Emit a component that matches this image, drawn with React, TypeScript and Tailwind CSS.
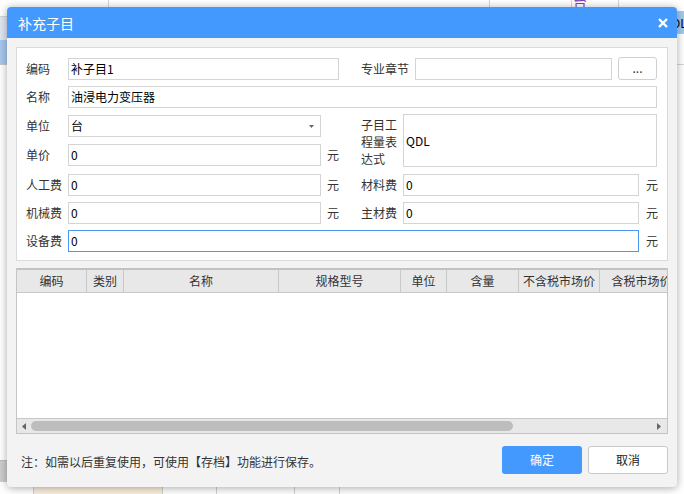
import React from 'react';

const FONT = "font-['Microsoft_YaHei','Noto_Sans_CJK_SC',sans-serif]";

const Input: React.FC<{ w: string; value?: string; focused?: boolean }> = ({ w, value, focused }) => (
  <div
    className={`${w} h-[22px] shrink-0 bg-white border ${focused ? 'border-[#4a98ef]' : 'border-[#d4d4d4]'} flex items-center pl-[2px] text-[12px] leading-none text-black`}
  >
    {value}
  </div>
);

const Label: React.FC<{ w?: string; children: React.ReactNode }> = ({ w = 'w-[42px]', children }) => (
  <div className={`${w} shrink-0 text-[12px] leading-none text-[#333] whitespace-nowrap`}>{children}</div>
);

const Yuan: React.FC = () => (
  <div className="w-[40px] shrink-0 pl-[6px] text-[12px] leading-none text-[#333]">元</div>
);

const columns = [
  { name: '编码', w: 'w-[70px]' },
  { name: '类别', w: 'w-[37px]' },
  { name: '名称', w: 'w-[155px]' },
  { name: '规格型号', w: 'w-[122px]' },
  { name: '单位', w: 'w-[46px]' },
  { name: '含量', w: 'w-[72px]' },
  { name: '不含税市场价', w: 'w-[81px]' },
  { name: '含税市场价', w: 'w-[84px]' },
];

export default function App() {
  return (
    <div className={`relative w-[684px] h-[494px] overflow-hidden bg-white ${FONT}`}>
      {/* spreadsheet behind the dialog */}
      <div className="flex w-full h-full">
        <div className="w-[7px] flex flex-col">
          <div className="h-[17px] border-b border-[#d6d6d6]" />
          <div className="h-[23px] bg-[#dfe7f3]" />
          <div className="h-[25px] bg-[#a7c8ee] border-b border-[#c8c8c8]" />
          <div className="h-[395px]" />
          <div className="h-[22px] bg-[#cdcdcd] border-t border-[#bdbdbd]" />
        </div>
        <div className="flex-1 flex flex-col">
          <div className="h-[17px] flex border-b border-[#d6d6d6]">
            <div className="w-[102px] border-r border-[#d6d6d6]" />
            <div className="w-[381px] border-r border-[#d6d6d6]" />
            <div className="w-[82px] border-r border-[#d6d6d6]" />
            <div className="w-[47px] border-r border-[#d6d6d6] overflow-hidden">
              <div className="-mt-[7px] ml-[1px] text-[14px] leading-[16px] text-[#8a3fb5]">台</div>
            </div>
            <div className="flex-1" />
          </div>
          <div className="flex-1" />
          <div className="h-[14px] flex border-t border-[#d0d0d0]">
            <div className="w-[27px] border-r border-[#d0d0d0]" />
            <div className="w-[129px] bg-[#fbeedd] border-r border-[#d0d0d0]" />
            <div className="w-[54px] border-r border-[#d0d0d0]" />
            <div className="w-[78px] border-r border-[#d0d0d0]" />
            <div className="w-[45px] border-r border-[#d0d0d0]" />
            <div className="flex-1" />
          </div>
        </div>
        <div className="w-[7px] flex flex-col">
          <div className="h-[11px]" />
          <div className="h-[23px] bg-[#a5c9ef] border-b border-[#c8c8c8] overflow-hidden text-[12px] leading-[23px] whitespace-nowrap">
            <span className="-ml-[14px] inline-block">QDL</span>
          </div>
          <div className="h-[31px] border-b border-[#d6d6d6]" />
        </div>
      </div>

      {/* dialog */}
      <div className="absolute left-[7px] top-[7px] w-[670px] h-[480px] bg-[#f3f3f3] rounded-[4px] shadow-[0_1px_8px_rgba(0,0,0,0.35)] flex flex-col">
        <div className="h-[31px] bg-[#4499ff] rounded-t-[4px] flex items-center justify-between pl-[11px] pr-[9px]">
          <span className="text-[14px] leading-none text-white">补充子目</span>
          <svg width="10" height="10" viewBox="0 0 10 10">
            <path d="M1 1 L9 9 M9 1 L1 9" stroke="white" strokeWidth="2.4" />
          </svg>
        </div>

        <div className="px-[9px] pt-[9px] flex flex-col">
          {/* form panel */}
          <div className="bg-white border border-[#dadada] pt-[9px] pb-[8px] pl-[9px] flex flex-col">
            <div className="flex items-center">
              <Label>编码</Label>
              <Input w="w-[271px]" value="补子目1" />
              <div className="w-[22px]" />
              <Label w="w-[54px]">专业章节</Label>
              <Input w="w-[197px]" />
              <div className="ml-[6px] w-[39px] h-[23px] bg-white border border-[#cfcfcf] rounded-[3px] flex items-end justify-center pb-[5px] text-[12px] leading-none text-[#333]">
                ...
              </div>
            </div>

            <div className="flex items-center mt-[6px]">
              <Label>名称</Label>
              <Input w="w-[589px]" value="油浸电力变压器" />
            </div>

            <div className="flex mt-[6px]">
              <div className="flex flex-col w-[335px]">
                <div className="flex items-center mt-[1px]">
                  <Label>单位</Label>
                  <div className="w-[253px] h-[22px] bg-white border border-[#d4d4d4] flex items-center justify-between pl-[2px] pr-[6px] text-[12px] leading-none text-black">
                    <span>台</span>
                    <svg width="5" height="3" viewBox="0 0 5 3">
                      <path d="M0 0 L5 0 L2.5 3 Z" fill="#666" />
                    </svg>
                  </div>
                </div>
                <div className="flex items-center mt-[7px]">
                  <Label>单价</Label>
                  <Input w="w-[253px]" value="0" />
                  <Yuan />
                </div>
              </div>
              <div className="flex">
                <div className="w-[42px] pt-[2px] text-[12px] leading-[17px] text-[#333]">
                  子目工
                  <br />
                  程量表
                  <br />
                  达式
                </div>
                <div className="w-[254px] h-[53px] bg-white border border-[#d4d4d4] flex items-center pl-[2px] text-[12px] leading-none text-black">
                  QDL
                </div>
              </div>
            </div>

            <div className="flex items-center mt-[7px]">
              <Label>人工费</Label>
              <Input w="w-[253px]" value="0" />
              <Yuan />
              <Label>材料费</Label>
              <Input w="w-[236px]" value="0" />
              <div className="pl-[7px] text-[12px] leading-none text-[#333]">元</div>
            </div>

            <div className="flex items-center mt-[6px]">
              <Label>机械费</Label>
              <Input w="w-[253px]" value="0" />
              <Yuan />
              <Label>主材费</Label>
              <Input w="w-[236px]" value="0" />
              <div className="pl-[7px] text-[12px] leading-none text-[#333]">元</div>
            </div>

            <div className="flex items-center mt-[6px]">
              <Label>设备费</Label>
              <Input w="w-[571px]" value="0" focused />
              <div className="pl-[7px] text-[12px] leading-none text-[#333]">元</div>
            </div>
          </div>

          {/* grid */}
          <div className="mt-[7px] h-[166px] bg-white border border-[#c4c4c4] border-t-2 border-t-[#c2c2c2] flex flex-col overflow-hidden">
            <div className="h-[23px] shrink-0 flex bg-[#e8e8e8] border-b border-[#c8c8c8] overflow-hidden">
              {columns.map(c => (
                <div
                  key={c.name}
                  className={`${c.w} shrink-0 border-r border-[#c8c8c8] flex items-center justify-center text-[12px] leading-none text-[#333] whitespace-nowrap`}
                >
                  {c.name}
                </div>
              ))}
            </div>
            <div className="flex-1" />
            <div className="h-[15px] shrink-0 bg-[#e8e8e8] border-t border-[#c8c8c8] flex items-center">
              <svg className="ml-[5px]" width="4" height="7" viewBox="0 0 4 7">
                <path d="M4 0 L4 7 L0 3.5 Z" fill="#666" />
              </svg>
              <div className="ml-[5px] w-[482px] h-[10px] rounded-full bg-[#bdbdbd]" />
              <div className="flex-1" />
              <svg className="mr-[6px]" width="4" height="7" viewBox="0 0 4 7">
                <path d="M0 0 L0 7 L4 3.5 Z" fill="#666" />
              </svg>
            </div>
          </div>

          {/* footer */}
          <div className="mt-[12px] flex items-center">
            <div className="ml-[5px] flex-1 pt-[4px] text-[12px] leading-none text-[#333]">
              注：如需以后重复使用，可使用【存档】功能进行保存。
            </div>
            <button className="w-[80px] h-[28px] rounded-[3px] bg-[#4499ff] text-white text-[12px] leading-none">
              确定
            </button>
            <button className="ml-[6px] w-[80px] h-[28px] rounded-[3px] bg-white border border-[#c8c8c8] text-[#222] text-[12px] leading-none">
              取消
            </button>
          </div>
        </div>
      </div>
    </div>
  );
}
